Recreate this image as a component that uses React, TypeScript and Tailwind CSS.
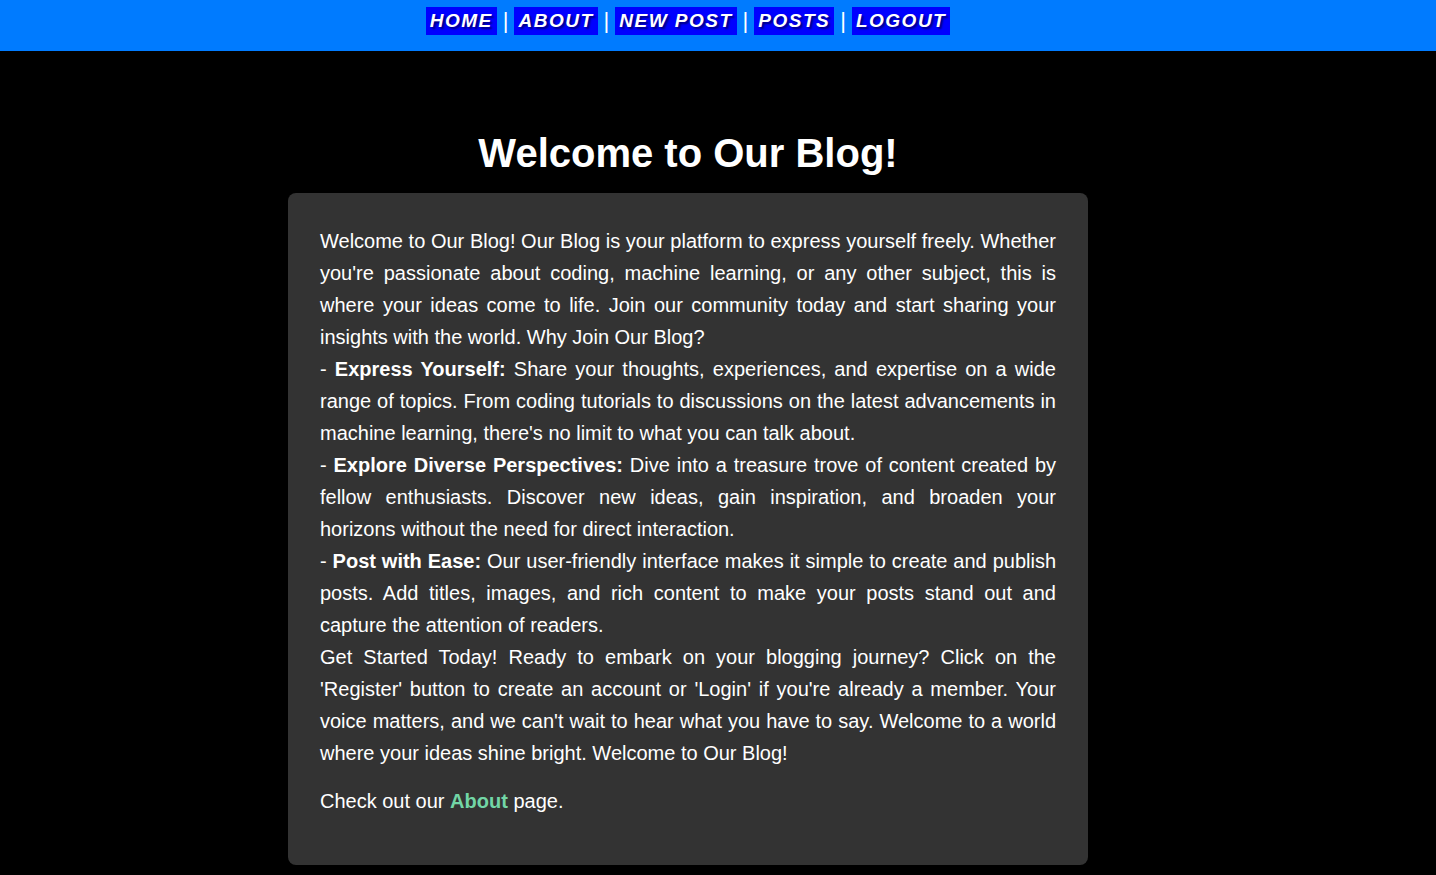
import React from 'react';

const links = ['Home', 'About', 'New Post', 'Posts', 'Logout'];

const Nav = () => (
    <nav className="h-[51px] bg-[#007bff] pt-[7px]">
        <ul className="flex justify-center items-center pr-[60px]">
            {links.map((label, i) => (
                <li key={label} className="flex items-center">
                    {i > 0 && <span className="mx-[6px] text-white text-[22px] leading-[28px]">|</span>}
                    <a
                        href="#"
                        className="block bg-[#0000ff] px-[4px] py-[3px] text-white text-[19px] leading-[22px] font-bold italic uppercase tracking-[1.5px] [text-shadow:2px_2px_2px_rgba(0,0,0,0.5)]"
                    >
                        {label}
                    </a>
                </li>
            ))}
        </ul>
    </nav>
);

export default function App() {
    return (
        <div className="min-h-screen bg-black text-white font-['Liberation_Sans',Arial,sans-serif]">
            <Nav />
            <main className="flex flex-col items-center pr-[60px]">
                <h1 className="mt-[79px] mb-[17px] text-[40px] leading-[46px] font-bold">Welcome to Our Blog!</h1>
                <div className="w-[800px] bg-[#333333] rounded-[8px] px-8 pt-8 pb-8 text-[20px] leading-[32px] text-justify">
                    <p className="mb-4">
                        Welcome to Our Blog! Our Blog is your platform to express yourself freely. Whether you're passionate about coding, machine learning, or any other subject, this is where your ideas come to life. Join our community today and start sharing your insights with the world. Why Join Our Blog?
                        <br />- <strong>Express Yourself:</strong> Share your thoughts, experiences, and expertise on a wide range of topics. From coding tutorials to discussions on the latest advancements in machine learning, there's no limit to what you can talk about.
                        <br />- <strong>Explore Diverse Perspectives:</strong> Dive into a treasure trove of content created by fellow enthusiasts. Discover new ideas, gain inspiration, and broaden your horizons without the need for direct interaction.
                        <br />- <strong>Post with Ease:</strong> Our user-friendly interface makes it simple to create and publish posts. Add titles, images, and rich content to make your posts stand out and capture the attention of readers.
                        <br />Get Started Today! Ready to embark on your blogging journey? Click on the 'Register' button to create an account or 'Login' if you're already a member. Your voice matters, and we can't wait to hear what you have to say. Welcome to a world where your ideas shine bright. Welcome to Our Blog!
                    </p>
                    <p className="mb-4">
                        Check out our <a href="#" className="font-bold text-[#72d6a6]">About</a> page.
                    </p>
                </div>
            </main>
        </div>
    );
}
